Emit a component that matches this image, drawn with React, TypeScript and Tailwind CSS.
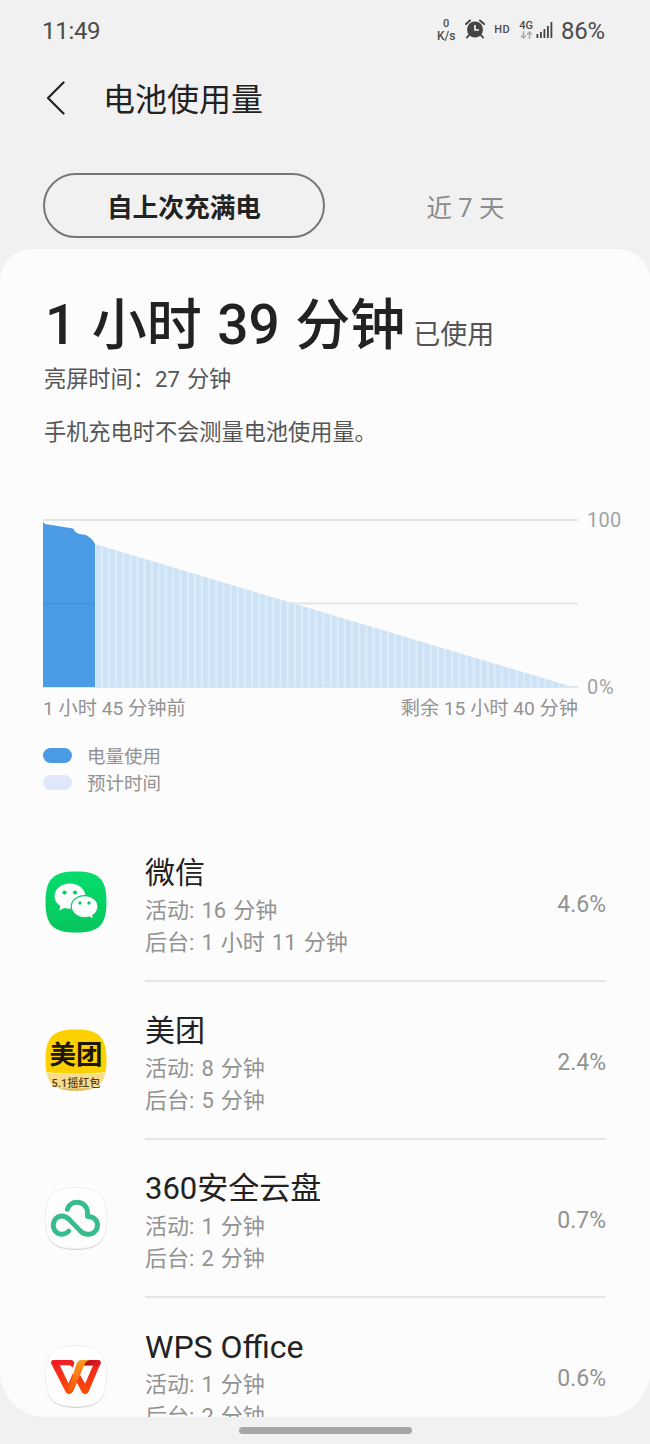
import type { ReactNode } from "react";

function WeChatIcon() {
  return (
    <svg width="62" height="62" viewBox="0 0 62 62">
      <defs>
        <linearGradient id="wechat" x1="0" y1="0" x2="0" y2="1">
          <stop offset="0" stopColor="#06dd6c" />
          <stop offset="1" stopColor="#06c65e" />
        </linearGradient>
      </defs>
      <path
        d="M31 0.5C54 0.5 61.5 8 61.5 31S54 61.500 31 61.500 0.500 54 0.500 31 8 0.500 31 0.500Z"
        fill="url(#wechat)"
      />
      <path
        d="M25 12.500C16.500 12.500 9.500 18 9.500 25.200c0 4 2.200 7.500 5.800 9.800L14.200 39.500l5-2.600c1.800.5 3.700.8 5.800.8 8.500 0 15.500-5.500 15.500-12.500S33.500 12.500 25 12.500Z"
        fill="#fff"
      />
      <circle cx="19.500" cy="21.500" r="2.100" fill="#06cf64" />
      <circle cx="30" cy="21.500" r="2.100" fill="#06cf64" />
      <path
        d="M39.700 24.600c-7.600 0-13.400 4.900-13.400 11s5.800 11 13.400 11c1.500 0 3-.2 4.300-.6l4.800 2.400-1.100-3.900c3.200-2 5.300-5.400 5.300-8.900 0-6.100-5.900-11-13.300-11Z"
        fill="#fff"
        stroke="#06cf64"
        strokeWidth="1.200"
      />
      <circle cx="35" cy="32" r="1.700" fill="#06cf64" />
      <circle cx="44" cy="32" r="1.700" fill="#06cf64" />
    </svg>
  );
}

function MeituanIcon() {
  return (
    <div className="relative h-[62px] w-[62px]">
      <svg width="62" height="62" viewBox="0 0 62 62">
        <defs>
          <clipPath id="meituan">
            <path d="M31 0.500C54 0.500 61.500 8 61.500 31S54 61.500 31 61.500 0.500 54 0.500 31 8 0.500 31 0.500Z" />
          </clipPath>
        </defs>
        <g clipPath="url(#meituan)">
          <rect width="62" height="62" fill="#fdd000" />
          <path d="M0 43.500Q31 47 62 43.500V62H0Z" fill="#f6dc8c" />
          <path d="M0 43.500Q31 47 62 43.500" fill="none" stroke="#fff0b8" strokeWidth="1.200" />
          <path d="M8 59.500h46v2.500H8z" fill="#dcb86a" />
        </g>
      </svg>
      <span className="absolute inset-x-0 top-[12px] text-center text-[26.500px] font-bold leading-[28px] text-[#1c1708]">
        美团
      </span>
      <span className="absolute inset-x-0 top-[48px] text-center text-[10.800px] font-medium leading-[13px] tracking-[0.200px] text-[#5a3a14]">
        5.1摇红包
      </span>
    </div>
  );
}

function WhiteTile({ children }: { children: ReactNode }) {
  return (
    <svg width="62" height="64" viewBox="0 0 62 64">
      <path
        d="M31 1.800C54 1.800 61.500 9.500 61.500 32S54 63 31 63 0.500 54.500 0.500 32 8 1.800 31 1.800Z"
        fill="#d6d6d6"
      />
      <path
        d="M31 0.500C54 0.500 61.500 8 61.500 31S54 61.500 31 61.500 0.500 54 0.500 31 8 0.500 31 0.500Z"
        fill="#fefefe"
        stroke="#ececec"
        strokeWidth="0.800"
      />
      {children}
    </svg>
  );
}

function CloudIcon() {
  return (
    <WhiteTile>
      <path
        d="M22.300 22.300C24 18 27.500 15.300 32 15.300c6 0 10.500 4.500 10.500 10.700v3.500C48.500 29.300 52.500 33 52.500 38.300S48.300 47.300 43 47.300c-3 0-5.300-1.200-7.500-3.200L24 32.300C22 30.300 20 29 17 29 12 29 8.300 33 8.300 38.200s4 9 9 9c2.800 0 4.800-1.200 6.500-3.200"
        fill="none"
        stroke="#37bd8b"
        strokeWidth="4.900"
        strokeLinecap="round"
        strokeLinejoin="round"
      />
    </WhiteTile>
  );
}

function WpsIcon() {
  return (
    <WhiteTile>
      <defs>
        <linearGradient id="wpsRed" x1="0" y1="0" x2="0" y2="1">
          <stop offset="0" stopColor="#f01a26" />
          <stop offset="1" stopColor="#fb5008" />
        </linearGradient>
        <linearGradient id="wpsFold" x1="0" y1="0" x2="1" y2="0">
          <stop offset="0" stopColor="#96130a" />
          <stop offset="1" stopColor="#f01a26" />
        </linearGradient>
        <linearGradient id="wpsOrange" x1="0" y1="0" x2="0" y2="1">
          <stop offset="0" stopColor="#fb9a1c" />
          <stop offset="1" stopColor="#fb5008" />
        </linearGradient>
      </defs>
      <path
        d="M8.500 15h16.700c3 0 4.800 1.600 3.700 4.700l-1.200 2.800-2.600-2.200H14.800l8.700 18.100 4.400-10.200 4.300 7.800-4.500 10.300c-2 3.700-5.600 3.500-7.300.2L6.400 19.100c-.9-2.200 0-4.100 2.100-4.100Z"
        fill="url(#wpsRed)"
      />
      <path
        d="M53 15c2.400 0 3.200 2 2.300 4.100L43.700 46.500c-1.900 3.500-5.500 3.400-7.200 0L31.200 36.500l3.500-6.900 5.400 9 8-18.300H38V15Z"
        fill="url(#wpsRed)"
      />
      <path d="M38 15h15c2.200 0 3 1.700 2.600 3.400L54.800 20.500H36Z" fill="url(#wpsFold)" />
      <path
        d="M36.500 15H46c-3.500 0-5.300 1.800-6.600 4.700L28.600 45.300c-1 2.100-2.900 3.600-5.100 3.500 2.200-.6-1-2-.3-3.600L31.200 19.700c1.300-3 2.300-4.700 5.300-4.700Z"
        fill="url(#wpsOrange)"
      />
    </WhiteTile>
  );
}

const apps = [
  { name: "微信", size: "text-[30px]", active: "16 分钟", background: "1 小时 11 分钟", percent: "4.6%", icon: <WeChatIcon /> },
  { name: "美团", size: "text-[30px]", active: "8 分钟", background: "5 分钟", percent: "2.4%", icon: <MeituanIcon /> },
  { name: "360安全云盘", size: "text-[31px]", active: "1 分钟", background: "2 分钟", percent: "0.7%", icon: <CloudIcon /> },
  { name: "WPS Office", size: "text-[32px]", active: "1 分钟", background: "2 分钟", percent: "0.6%", icon: <WpsIcon /> },
];

function StatusBar() {
  return (
    <div className="flex h-[60px] shrink-0 items-center justify-between pl-[42px] pr-[45px] text-[#4b4b4b]">
      <span className="pt-px text-[24px] leading-[28px] tracking-[-0.300px]">11:49</span>
      <div className="flex items-center">
        <div className="mr-[9px] flex w-[20px] flex-col items-center text-[12px] font-medium leading-[12px]">
          <span className="text-[11px]">0</span>
          <span>K/s</span>
        </div>
        <svg width="20" height="20" viewBox="0 0 20 20" className="mb-[2px] mr-[9px]">
          <path d="M1 5l4-3.500M19 5l-4-3.500M4 16l-2 2.500M16 16l2 2.500" stroke="#444" strokeWidth="2" strokeLinecap="round" />
          <circle cx="10" cy="10.500" r="8" fill="#444" />
          <path d="M10 6v5h4" fill="none" stroke="#f1f1f1" strokeWidth="1.700" />
        </svg>
        <span className="mr-[9px] text-[11px] font-medium leading-[12px] tracking-[0.400px]">HD</span>
        <div className="mb-[2px] mr-[3px] flex w-[14px] flex-col items-center">
          <span className="text-[11px] font-medium leading-[11px]">4G</span>
          <svg width="13" height="8" viewBox="0 0 13 8" fill="none" stroke="#aaa" strokeWidth="1.500">
            <path d="M3.500 0v7M1 4.500L3.500 7 6 4.500M9.500 8V1M7 3.500L9.500 1 12 3.500" />
          </svg>
        </div>
        <svg width="18" height="17" viewBox="0 0 18 17" fill="#444" className="mb-px mr-[7px]">
          <rect x="0.500" y="13" width="1.800" height="4" />
          <rect x="4" y="11" width="1.800" height="6" />
          <rect x="7.500" y="8" width="1.800" height="9" />
          <rect x="11" y="5" width="1.800" height="12" />
          <rect x="14.500" y="1" width="1.800" height="16" />
        </svg>
        <span className="pt-px text-[24px] leading-[28px] tracking-[-0.200px]">86%</span>
      </div>
    </div>
  );
}

function BatteryChart() {
  return (
    <svg width="535" height="169" viewBox="0 0 535 169" className="block">
      <defs>
        <pattern id="stripes" x="51" width="7.150" height="169" patternUnits="userSpaceOnUse">
          <rect width="7.150" height="169" fill="#deeefb" />
          <rect x="1.600" width="5.200" height="169" fill="#cde2f5" />
        </pattern>
      </defs>
      <path d="M0 1h535M0 84.500h535M0 168h535" stroke="#e5e5e5" strokeWidth="2" />
      <path d="M52 25L530 168H52Z" fill="url(#stripes)" />
      <path d="M0 3L2 5 30 9.500 33 13.500 36 15 43 16 46 18 50 21.500 52 25V168H0Z" fill="#4b9ae6" />
      <path d="M0 84.500h52" stroke="#438dd7" strokeWidth="1" />
    </svg>
  );
}

export default function App() {
  return (
    <main className="flex h-[1444px] w-[650px] flex-col overflow-hidden whitespace-nowrap bg-[#f1f1f1] font-['Roboto','Noto_Sans_CJK_SC',sans-serif] text-[#222]">
      <StatusBar />

      <header className="flex h-[78px] shrink-0 items-center pl-[46px]">
        <svg width="20" height="34" viewBox="0 0 20 34" className="mb-[2px] mr-[37px]">
          <path d="M17.500 1.500L2 17l15.500 15.500" fill="none" stroke="#222" strokeWidth="2.200" strokeLinecap="round" strokeLinejoin="round" />
        </svg>
        <h1 className="pt-[2px] text-[32px] leading-[40px]">电池使用量</h1>
      </header>

      <nav className="mt-[35px] flex h-[65px] shrink-0 pl-[43px]">
        <button className="w-[282px] rounded-full border-2 border-[#777] pt-[5px] text-[25.700px] font-bold">
          自上次充满电
        </button>
        <button className="w-[281px] pt-[5px] text-[25.500px] text-[#8c8c8c]">近 7 天</button>
      </nav>

      <section className="mt-[11px] h-[1168px] shrink-0 overflow-hidden rounded-t-[32px] rounded-b-[46px] bg-[#fcfcfc] pl-[43px] pt-[44px]">
        <div className="flex items-baseline leading-[64px]">
          <span className="ml-[2px] text-[55px] font-medium [word-spacing:1.800px]">1 小时 39 分钟</span>
          <span className="ml-[8px] text-[27px] text-[#555]">已使用</span>
        </div>
        <p className="-mt-[3px] ml-px text-[22.200px] leading-[30px] text-[#555] [word-spacing:1.500px]">亮屏时间：27 分钟</p>
        <p className="mt-[23px] ml-px text-[22.200px] leading-[30px] text-[#555]">手机充电时不会测量电池使用量。</p>

        <div className="mt-[72px] flex">
          <BatteryChart />
          <div className="-my-[10px] ml-[9px] flex flex-col justify-between text-[20px] leading-[22px] tracking-[0.300px] text-[#a3a3a3]">
            <span>100</span>
            <span className="tracking-[0.800px]">0%</span>
          </div>
        </div>
        <div className="mt-[9px] flex w-[535px] justify-between text-[19.200px] leading-[24px] text-[#929292]">
          <span>1 小时 45 分钟前</span>
          <span>剩余 15 小时 40 分钟</span>
        </div>

        <div className="mt-[23px] text-[18.500px] leading-[27px] text-[#929292]">
          <div className="flex items-center">
            <span className="mb-[4px] mr-[15px] h-[15px] w-[29px] rounded-full bg-[#4b9ae6]" />
            电量使用
          </div>
          <div className="flex items-center">
            <span className="mb-[4px] mr-[15px] h-[15px] w-[29px] rounded-full bg-[#dee8fa]" />
            预计时间
          </div>
        </div>

        <ul className="mt-[26px]">
          {apps.map((app) => (
            <li key={app.name} className="flex h-[158px]">
              <div className="mt-[47px] ml-[2px] w-[100px]">{app.icon}</div>
              <div className="flex w-[461px] justify-between border-b-2 border-[#e6e6e6]">
                <div className="pt-[31px] text-[22px] leading-[32px] text-[#929292] [word-spacing:1.600px]">
                  <h2 className={`mb-[4px] leading-[36px] text-[#222] [word-spacing:0] ${app.size}`}>{app.name}</h2>
                  <p>活动: {app.active}</p>
                  <p>后台: {app.background}</p>
                </div>
                <span className="pt-[67px] text-[23px] leading-[28px] text-[#929292]">{app.percent}</span>
              </div>
            </li>
          ))}
        </ul>
      </section>

      <div className="mx-auto mt-[10px] h-[7px] w-[173px] shrink-0 rounded-full bg-[#a6a6a6]" />
    </main>
  );
}
